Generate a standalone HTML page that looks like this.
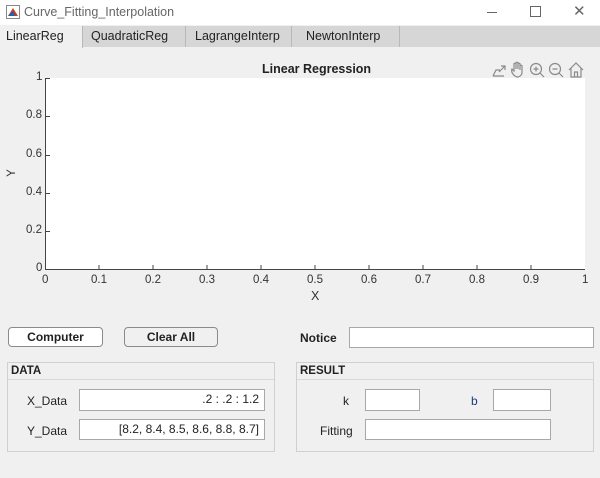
<!DOCTYPE html>
<html><head><style>
body{margin:0;width:600px;height:478px;background:#f0f0f0;font-family:"Liberation Sans",Arial,sans-serif;position:relative;overflow:hidden;font-size:12px;color:#222}
.a{position:absolute}
.tab{position:absolute;top:26px;height:21px;line-height:21px;font-size:12.5px;border-right:1px solid #b8b8b8;box-sizing:border-box;padding-left:6px}
.in{position:absolute;background:#fff;border:1px solid #a8a8a8;box-sizing:border-box;font-size:12px;text-align:right;padding-right:5px;line-height:19px}
.btn{position:absolute;border:1px solid #8a8a8a;border-radius:4px;box-sizing:border-box;text-align:center;font-weight:bold;font-size:12px;line-height:18px}
.pan{position:absolute;border:1px solid #d0d0d0;box-sizing:border-box}
.pan .h{position:absolute;left:0;right:0;top:0;height:16px;border-bottom:1px solid #d8d8d8;font-weight:bold;font-size:11.5px;padding-left:3px;line-height:16px}
.lab{position:absolute;font-size:12px}
.tk{position:absolute;font-size:11.5px;color:#333}
</style></head><body>
<div class="a" style="left:0;top:0;width:600px;height:25px;background:#fff"></div>
<svg class="a" style="left:6px;top:5px" width="14" height="14"><rect x="0.5" y="0.5" width="13" height="13" fill="#fff" stroke="#888"/><path d="M2 11 L7 3 L12 11 Z" fill="#c04020"/><path d="M2 11 L7 6 L9 11Z" fill="#2060b0"/></svg>
<div class="a" style="left:24px;top:5px;font-size:12.5px;color:#666">Curve_Fitting_Interpolation</div>
<div class="a" style="left:487px;top:12px;width:10px;height:1px;background:#666"></div>
<div class="a" style="left:530px;top:6px;width:9px;height:9px;border:1px solid #666"></div>
<div class="a" style="left:573px;top:2px;font-size:15px;color:#666">✕</div>
<div class="a" style="left:0;top:26px;width:600px;height:21px;background:#d6d6d6"></div>
<div class="tab" style="left:0;width:83px;background:#f0f0f0;height:22px">LinearReg</div>
<div class="tab" style="left:83px;width:103px;padding-left:8px">QuadraticReg</div>
<div class="tab" style="left:186px;width:106px;padding-left:9px">LagrangeInterp</div>
<div class="tab" style="left:292px;width:108px;padding-left:14px">NewtonInterp</div>
<div class="a" style="left:262px;top:62px;font-weight:bold;font-size:12.5px">Linear Regression</div>
<svg class="a" style="left:490px;top:60px" width="100" height="20" fill="none" stroke="#8a8a8a" stroke-width="1.2">
<path d="M3 16 H14 M3 16 L6 10 H10 M11 6 L15 6 L15 10 M15 6 L9 12"/>
<path d="M25 16 C22 14 21 11 22 9 L24 11 V4 C24 3 26 3 26 4 V9 V3 C26 2 28 2 28 3 V9 V4 C28 3 30 3 30 4 V10 V6 C30 5 32 5 32 6 V12 C32 15 30 17 27 17 Z"/>
<circle cx="46" cy="9" r="5.5"/><path d="M50 13 L54 17 M43.5 9 H48.5 M46 6.5 V11.5"/>
<circle cx="65" cy="9" r="5.5"/><path d="M69 13 L73 17 M62.5 9 H67.5"/>
<path d="M79 10 L86 3 L93 10 M81 8 V17 H91 V8 M84.5 17 V12 H87.5 V17"/>
</svg>
<div class="a" style="left:45px;top:78px;width:540px;height:191px;background:#fff"></div>
<svg class="a" style="left:0;top:0" width="600" height="300">
<path d="M45.5 78 V269.5 H585" stroke="#444" fill="none"/>
<g stroke="#444">
<line x1="99" y1="269" x2="99" y2="265"/><line x1="153" y1="269" x2="153" y2="265"/><line x1="207" y1="269" x2="207" y2="265"/><line x1="261" y1="269" x2="261" y2="265"/><line x1="315" y1="269" x2="315" y2="265"/><line x1="369" y1="269" x2="369" y2="265"/><line x1="423" y1="269" x2="423" y2="265"/><line x1="477" y1="269" x2="477" y2="265"/><line x1="531" y1="269" x2="531" y2="265"/>
<line x1="45" y1="78.5" x2="50" y2="78.5"/><line x1="45" y1="116.5" x2="50" y2="116.5"/><line x1="45" y1="155.5" x2="50" y2="155.5"/><line x1="45" y1="193.5" x2="50" y2="193.5"/><line x1="45" y1="231.5" x2="50" y2="231.5"/>
</g></svg>
<div class="tk" style="left:36px;top:71px">1</div>
<div class="tk" style="left:26px;top:109px">0.8</div>
<div class="tk" style="left:26px;top:148px">0.6</div>
<div class="tk" style="left:26px;top:186px">0.4</div>
<div class="tk" style="left:26px;top:224px">0.2</div>
<div class="tk" style="left:36px;top:262px">0</div>
<div class="tk" style="left:8px;top:167px;transform:rotate(-90deg)">Y</div>
<div class="tk" style="left:42px;top:274px">0</div>
<div class="tk" style="left:91px;top:274px">0.1</div>
<div class="tk" style="left:145px;top:274px">0.2</div>
<div class="tk" style="left:199px;top:274px">0.3</div>
<div class="tk" style="left:253px;top:274px">0.4</div>
<div class="tk" style="left:307px;top:274px">0.5</div>
<div class="tk" style="left:361px;top:274px">0.6</div>
<div class="tk" style="left:415px;top:274px">0.7</div>
<div class="tk" style="left:469px;top:274px">0.8</div>
<div class="tk" style="left:523px;top:274px">0.9</div>
<div class="tk" style="left:582px;top:274px">1</div>
<div class="tk" style="left:311px;top:289px;font-size:12.5px">X</div>
<div class="btn" style="left:8px;top:327px;width:95px;height:20px;background:#fff">Computer</div>
<div class="btn" style="left:124px;top:327px;width:94px;height:20px;background:#f0f0f0">Clear All</div>
<div class="lab" style="left:300px;top:331px;font-weight:bold">Notice</div>
<div class="in" style="left:349px;top:327px;width:245px;height:21px"></div>
<div class="pan" style="left:7px;top:362px;width:268px;height:90px"><div class="h">DATA</div></div>
<div class="pan" style="left:296px;top:362px;width:298px;height:90px"><div class="h">RESULT</div></div>
<div class="lab" style="left:27px;top:394px">X_Data</div>
<div class="in" style="left:79px;top:389px;width:186px;height:22px">.2 : .2 : 1.2</div>
<div class="lab" style="left:27px;top:424px">Y_Data</div>
<div class="in" style="left:79px;top:419px;width:186px;height:21px">[8.2, 8.4, 8.5, 8.6, 8.8, 8.7]</div>
<div class="lab" style="left:343px;top:394px">k</div>
<div class="in" style="left:365px;top:389px;width:55px;height:22px"></div>
<div class="lab" style="left:471px;top:394px;color:#1a3a80">b</div>
<div class="in" style="left:493px;top:389px;width:58px;height:22px"></div>
<div class="lab" style="left:320px;top:424px">Fitting</div>
<div class="in" style="left:365px;top:419px;width:186px;height:21px"></div>
</body></html>
